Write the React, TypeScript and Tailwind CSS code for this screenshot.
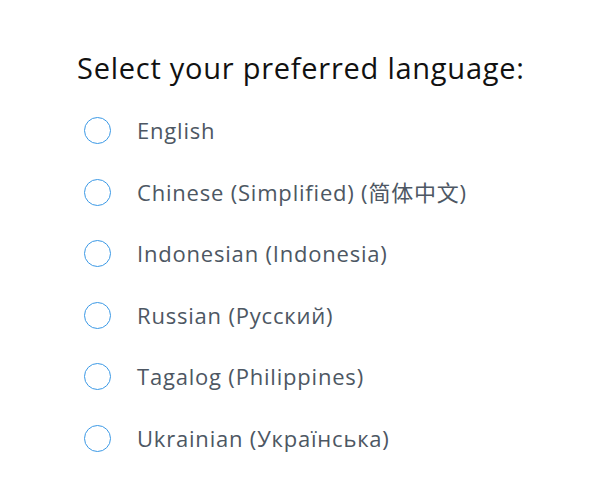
const languages = [
  "English",
  "Chinese (Simplified) (简体中文)",
  "Indonesian (Indonesia)",
  "Russian (Русский)",
  "Tagalog (Philippines)",
  "Ukrainian (Українська)",
];

export default function App() {
  return (
    <main
      className="min-h-screen bg-white pl-[77px] pt-[48px]"
      style={{ fontFamily: '"Open Sans", "Noto Sans CJK SC", sans-serif' }}
    >
      <h1 className="text-[29px] leading-[40px] text-[#111] tracking-[0.75px]">
        Select your preferred language:
      </h1>
      <ul className="mt-[12px] flex flex-col">
        {languages.map((lang) => (
          <li key={lang} className="flex h-[61.5px] items-center">
            <span className="ml-[7px] h-[27px] w-[27px] rounded-full border-[1.8px] border-[#3b99e6]" />
            <span className="ml-[26px] text-[22px] tracking-[0.8px] text-[#4d5763]">{lang}</span>
          </li>
        ))}
      </ul>
    </main>
  );
}
